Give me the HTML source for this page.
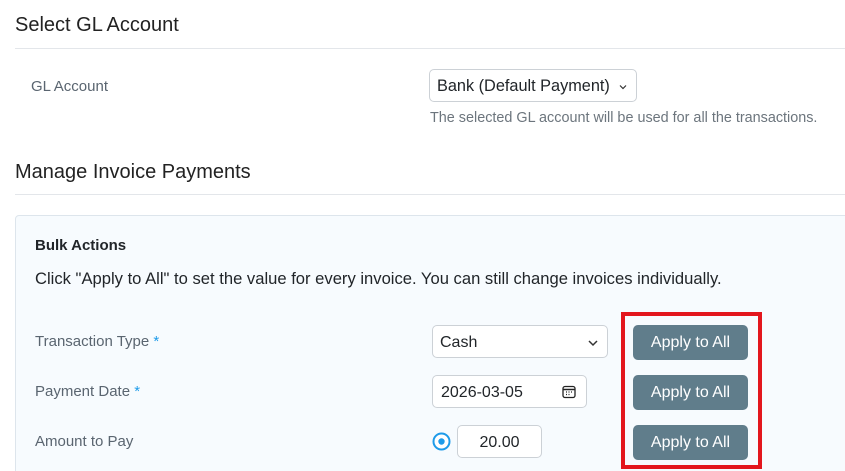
<!DOCTYPE html>
<html><head><style>
html,body{margin:0;width:845px;height:471px;overflow:hidden}
body{background:#fff;font-family:"Liberation Sans",sans-serif;color:#212529;position:relative}
.a{position:absolute;white-space:nowrap}
.h{font-size:20px;color:#222}
.line{position:absolute;left:15px;right:0;height:1px;background:#e3e6ea}
.lbl{font-size:15px;color:#5a6570}
.inp{position:absolute;border:1px solid #ccd1d6;border-radius:5px;background:#fff;box-sizing:border-box;font-size:16px;line-height:33px}
.btn{position:absolute;left:633px;width:115px;height:35px;background:#607d8b;color:#fff;border-radius:5px;font-size:16px;text-align:center;line-height:35px}
.star{color:#1e9be9}
</style></head><body>
<div class="a h" style="left:15px;top:14px">Select GL Account</div>
<div class="line" style="top:48px"></div>
<div class="a lbl" style="left:31px;top:78px">GL Account</div>
<div class="inp" style="left:429px;top:69px;width:208px;height:33px;padding-left:7px;font-size:16.3px">Bank (Default Payment)<svg style="position:absolute;right:9px;top:14px" width="8" height="6" viewBox="0 0 8 6"><path d="M1 1.5l3 3 3-3" stroke="#333" stroke-width="1.2" fill="none"/></svg></div>
<div class="a" style="left:430px;top:110px;font-size:14.4px;color:#6c757d">The selected GL account will be used for all the transactions.</div>
<div class="a h" style="left:15px;top:161px">Manage Invoice Payments</div>
<div class="line" style="top:194px"></div>
<div style="position:absolute;left:15px;top:215px;width:840px;height:270px;background:#f7fbfe;border:1px solid #dde5ec;border-radius:4px"></div>
<div class="a" style="left:35px;top:237px;font-size:15px;font-weight:bold">Bulk Actions</div>
<div class="a" style="left:35px;top:269px;font-size:16.6px">Click "Apply to All" to set the value for every invoice. You can still change invoices individually.</div>
<div class="a lbl" style="left:35px;top:333px">Transaction Type <span class="star">*</span></div>
<div class="a lbl" style="left:35px;top:383px">Payment Date <span class="star">*</span></div>
<div class="a lbl" style="left:35px;top:433px">Amount to Pay</div>
<div class="inp" style="left:432px;top:325px;width:176px;height:33px;padding-left:7px">Cash<svg style="position:absolute;right:9px;top:14px" width="10" height="7" viewBox="0 0 10 7"><path d="M1 1l4 4 4-4" stroke="#333" stroke-width="1.5" fill="none"/></svg></div>
<div class="inp" style="left:432px;top:375px;width:155px;height:33px;padding-left:8px">2026-03-05<svg style="position:absolute;right:10px;top:9px" width="14" height="14" viewBox="0 0 14 14"><rect x="1" y="1.5" width="12" height="11" rx="2" fill="none" stroke="#222" stroke-width="1.3"/><path d="M1 4.5h12" stroke="#222" stroke-width="1.5"/><path d="M4 7h1M6.5 7h1M9 7h1M4 9.5h1M6.5 9.5h1" stroke="#222" stroke-width="1.3"/></svg></div>
<svg class="a" style="left:432px;top:432px" width="19" height="19"><circle cx="9.5" cy="9.5" r="8" fill="#fff" stroke="#1e9be9" stroke-width="2"/><circle cx="9.5" cy="9.5" r="3.2" fill="#1e9be9"/></svg>
<div class="inp" style="left:457px;top:425px;width:85px;height:33px;text-align:center">20.00</div>
<div class="btn" style="top:325px">Apply to All</div>
<div class="btn" style="top:375px">Apply to All</div>
<div class="btn" style="top:425px">Apply to All</div>
<div style="position:absolute;left:621px;top:312px;width:133px;height:149px;border:4px solid #e3161d"></div>
</body></html>
